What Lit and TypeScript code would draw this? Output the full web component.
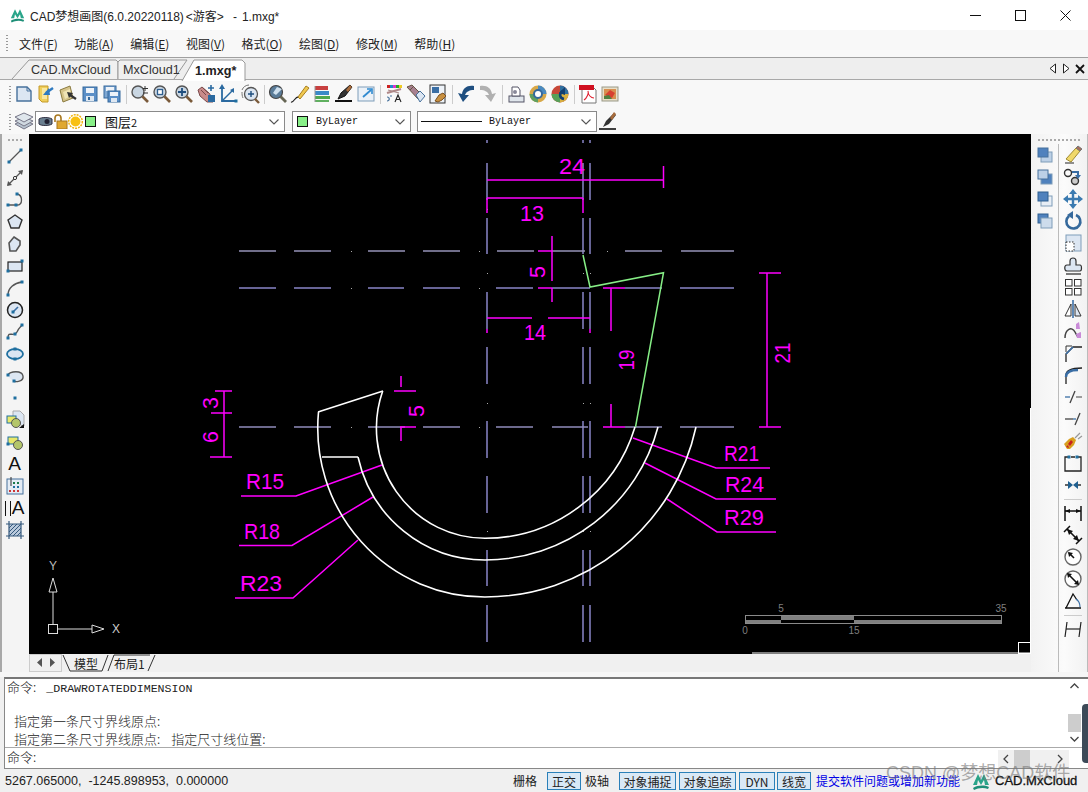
import { LitElement, html, css, svg } from "lit";
import { customElement } from "lit/decorators.js";

const n = (x: number, y: number) => svg`<rect x=${x - 1.5} y=${y - 1.5} width="3" height="3" fill="#1f6f9f"/>`;
const G = "#dce6f2";
const B = "#3a6ea5";
const sq = (a: string, b: string) => svg`<rect x="6" y="7" width="11" height="10" fill=${b} stroke="#7f9db9"/><rect x="3" y="3" width="10" height="9" fill=${a} stroke="#47719c"/>`;
const L = (d: string, c = "#333", w = 1.3) => svg`<path d=${d} fill="none" stroke=${c} stroke-width=${w}/>`;
const F = (d: string, c: string, s = "none") => svg`<path d=${d} fill=${c} stroke=${s}/>`;
const mag = (inner: unknown) => svg`<circle cx="8" cy="8" r="6" fill="#c9d6e2" stroke="#555" stroke-width="1.4"/><path d="M12.5 12.5 18 18" stroke="#7a5a3a" stroke-width="2.6"/>${inner}`;

const leftA = [
  svg`${L("M4 16 16 4", "#555")}${n(4, 16)}${n(16, 4)}`,
  svg`${L("M3 17 17 3", "#555")}<circle cx="10" cy="10" r="1.6" fill="#fff" stroke="#333"/>${F("M2 18 3 13 7 17Z", "#555")}${F("M18 2 13 3 17 7Z", "#555")}`,
  svg`${L("M3 15H12C18 15 18 5 12 4", "#555")}${n(3, 15)}${n(11, 15)}${n(12, 4)}`,
  svg`<path d="M10 3 17 8 14 16 6 16 3 8Z" fill=${G} stroke="#333" stroke-width="1.4"/>`,
  svg`<path d="M9 3 15 7 15 11 11 17 5 17 4 9Z" fill=${G} stroke="#555" stroke-width="1.6"/>`,
  svg`<rect x="3" y="6" width="14" height="9" fill=${G} stroke="#222" stroke-width="1.2"/>${n(3, 15)}${n(17, 5)}`,
  svg`${L("M3 17C3 10 9 5 17 4", "#555", 1.5)}${n(3, 17)}${n(17, 4)}`,
  svg`<circle cx="10" cy="10" r="7.5" fill=${G} stroke="#222" stroke-width="1.5"/>${L("M8 12 13 7", B, 1.6)}${n(8, 12)}`,
  svg`${L("M3 16C3 8 9 16 12 10S15 6 17 3", "#555", 1.4)}${n(3, 16)}${n(10, 12)}${n(17, 3)}`,
  svg`<ellipse cx="10" cy="10" rx="8" ry="5" fill=${G} stroke="#1f6f9f" stroke-width="1.8"/>${n(10, 5)}${n(10, 15)}`,
  svg`<ellipse cx="11" cy="10" rx="7" ry="5" fill=${G} stroke="none"/>${L("M3 9C5 5 17 4 18 10S10 16 9 15", "#555", 1.4)}${n(3, 9)}${n(9, 15)}`,
  svg`${n(10, 10)}`,
  svg`${F("M8 1H15L19 5V16H17L8 8Z", "#dce6f2", "#aaa")}<rect x="2" y="6" width="9" height="7" fill="#e8e86a" stroke="#1f6f9f"/><circle cx="11" cy="13" r="4.5" fill="#b4c66a" stroke="#555"/>${F("M14 18H19V14Z", "#111")}`,
  svg`<rect x="3" y="5" width="10" height="7" fill="#e8e86a" stroke="#1f6f9f"/><circle cx="13" cy="13" r="4.5" fill="#b4c66a" stroke="#555"/>${n(3, 12)}`,
];
const tableIc = svg`<rect x="2" y="3" width="16" height="15" fill="#e4ecf5" stroke="#47719c"/>${L("M6 1V10", "#333", 1)}<rect x="8" y="6" width="2" height="2" fill="#1a7a4a"/><rect x="12" y="6" width="2" height="2" fill="#1a7a4a"/><rect x="8" y="10" width="2" height="2" fill="#1f6f9f"/><rect x="12" y="10" width="2" height="2" fill="#1f6f9f"/><rect x="4" y="14" width="2" height="2" fill="#c33"/><rect x="8" y="14" width="2" height="2" fill="#c33"/><rect x="12" y="14" width="2" height="2" fill="#c33"/>`;
const hatchIc = svg`<rect x="4" y="4" width="12" height="12" fill="#b9c9dc"/>${L("M4 8 8 4M4 12 12 4M4 16 16 4M8 16 16 8M12 16 16 12", "#35597c", 1)}${L("M1 4H19M1 16H19M4 1V19M16 1V19", "#35597c", 1.2)}`;

const col1 = [
  sq("#4f81bd", "#bcd0e6"),
  sq("#bcd0e6", "#4f81bd"),
  svg`<rect x="6" y="7" width="11" height="10" fill="#e8eef5" stroke="#7f9db9"/><rect x="3" y="3" width="10" height="9" fill="#4f81bd" stroke="#2f5f8f"/>`,
  svg`<rect x="3" y="3" width="10" height="9" fill="#4f81bd" stroke="#2f5f8f"/><rect x="6" y="7" width="11" height="10" fill="#cddcec" stroke="#7f9db9"/>`,
];

const col2Top = [
  svg`${L("M2 18H11", "#555")}${F("M3 14 13 3 17 6 8 17Z", "#f0d86a", "#a08a30")}${F("M13 3 15 1 19 4 17 6Z", "#a86c5c", "#777")}`,
  svg`<circle cx="5" cy="6" r="3.5" fill="none" stroke="#333" stroke-width="1.4"/><circle cx="12" cy="14" r="3.5" fill="#ccc" stroke="#333" stroke-width="1.4"/>${L("M9 5H15V9", B, 2)}${F("M12 8H18L15 12Z", B)}`,
  svg`${L("M10 3V17M3 10H17", "#3a7ab0", 2.4)}${F("M10 0 14 5H6Z M10 20 14 15H6Z M0 10 5 6V14Z M20 10 15 6V14Z", "#3a7ab0")}`,
  svg`<path d="M6 5A7 7 0 1 0 13 4" fill="none" stroke="#35699c" stroke-width="2.6"/>${F("M10 0V8L4 4Z", "#35699c")}`,
  svg`<rect x="3" y="2" width="15" height="16" fill=${G} stroke="#7f9db9"/><rect x="3" y="9" width="8" height="9" fill="#fff" stroke="#333" stroke-dasharray="1.5 1.5"/>`,
  svg`<path d="M7 10V6C7 2 13 2 13 6V10H17C19 10 19 16 17 16H4C1 16 1 10 4 10Z" fill=${G} stroke="#333" stroke-width="1.2"/>${L("M3 19H18", "#333")}`,
  svg`<rect x="2.5" y="2.5" width="6.5" height="6.5" fill="#fff" stroke="#333"/><rect x="11.5" y="2.5" width="6.5" height="6.5" fill="#fff" stroke="#333"/><rect x="2.5" y="11.5" width="6.5" height="6.5" fill="#fff" stroke="#333"/><rect x="11.5" y="11.5" width="6.5" height="6.5" fill="#fff" stroke="#333"/>`,
  svg`${L("M10 1V19", B, 1.6)}<path d="M8 5V17H2Z" fill="#fff" stroke="#333"/><path d="M12 5V17H18Z" fill=${G} stroke="#333"/>`,
  svg`${L("M2 17C2 8 9 5 12 11S15 17 17 12", "#444", 1.5)}${F("M13 3 16 1 17 8 13 8Z", "#c98bd8")}${F("M13 13 18 11 18 17 14 17Z", "#c98bd8")}`,
  svg`${L("M3 19V11L10 4H19", "#222", 1.3)}${L("M3 9V3H9", "#333", 1)}${L("M3 11 10 4", B, 1.6)}`,
  svg`${L("M3 19V10C3 6 7 3 19 3", "#222", 1.3)}${L("M3 12C3 7 8 5 15 5", B, 2.4)}`,
  svg`${L("M2 10H7", B)}${L("M13 10H19", "#444", 1)}${L("M7 16 12 4", "#444", 1.3)}`,
  svg`${L("M2 10H10", "#444")}${L("M10 10H13", B)}${L("M12 16 17 4", "#444", 1.3)}`,
  svg`${F("M4 18 1 13 6 8 10 6 13 9 11 14 7 18Z", "#d8a020")}${F("M5 13 8 9 10 11 7 15Z", "#c82020")}${F("M3 16 5 14 6 17Z", "#c82020")}${L("M12 7 17 2M15 8 19 5", "#999", 1.2)}`,
  svg`${L("M5 4H2V18H18V4H15M8 4H12", "#222", 1.3)}${n(6, 4)}${n(14, 4)}`,
  svg`${L("M2 10H8M12 10H18", "#333", 1.5)}${F("M10 10 5 6V14Z M10 10 15 6V14Z", "#1f5f8f")}`,
];
const col2Bot = [
  svg`${L("M2 3V18M18 3V18", "#111", 1.5)}${L("M2 8H18", "#111", 1.5)}${F("M2 8 7 6V10Z M18 8 13 6V10Z", "#111")}`,
  svg`${L("M1 7 7 1M13 19 19 13", "#111", 1.5)}${L("M4 4 16 16", "#111", 1.6)}${F("M4 4 10 6 6 10Z M16 16 10 14 14 10Z", "#111")}`,
  svg`<circle cx="10" cy="10" r="8" fill="#fff" stroke="#666" stroke-width="1.4"/>${L("M6 6 11 11", "#111", 1.6)}${F("M5 5 10 6 6 10Z", "#111")}`,
  svg`<circle cx="10" cy="10" r="8" fill="#fff" stroke="#666" stroke-width="1.4"/>${L("M5 5 15 15", "#111", 1.6)}${F("M4 4 9 5 5 9Z M16 16 11 15 15 11Z", "#111")}`,
  svg`${L("M2 17H18", "#111", 1.5)}${L("M3 17 10 3 14 9", "#111", 1.3)}${L("M13 8C16 10 17 13 17 16", B, 1.2)}`,
  svg`${L("M4 3 2 18M18 3 16 18", "#222", 1.2)}${L("M3 10H17", "#222", 1.2)}`,
];

const top1 = [
  svg`<path d="M3 3H13L17 7V17H3Z" fill=${G} stroke="#47719c" stroke-width="1.4"/>${L("M13 3V7H17", "#47719c", 1)}`,
  svg`${F("M3 2H12V18H6L3 15Z", "#f0cf5a", "#c49a2a")}${F("M6 4H11V15H6Z", "#f8e7a0")}${L("M17 4 10 9", "#2f7ac0", 2.4)}${F("M7 11 13 4 14 11Z", "#2f7ac0")}`,
  svg`${F("M2 6 12 2 15 14 5 18Z", "#d6c48a", "#8a7a40")}${F("M5 8 12 5 13 12 7 15Z", "#efe3b4")}${L("M18 15 12 11", "#333", 2.2)}${F("M9 8 15 9 11 14Z", "#333")}`,
  svg`<rect x="3" y="3" width="14" height="14" fill="#5b8fc7" stroke="#35699c"/><rect x="6" y="4" width="8" height="5" fill="#eef3f9"/><rect x="6" y="12" width="8" height="5" fill="#dfe8f2"/><rect x="8" y="13" width="2" height="3" fill="#35699c"/>`,
  svg`<rect x="2" y="2" width="12" height="12" fill="#7ea7d2" stroke="#35699c"/><rect x="4" y="3" width="8" height="4" fill="#eef3f9"/><rect x="6" y="7" width="12" height="11" fill="#5b8fc7" stroke="#35699c"/><rect x="8" y="8" width="8" height="4" fill="#eef3f9"/><rect x="9" y="14" width="6" height="4" fill="#dfe8f2"/>`,
  0,
  svg`${mag(svg``)}<path d="M15 2V7M13 4.5H18M13 9H18" stroke="#333"/>`,
  mag(svg`<rect x="5.5" y="5.5" width="5" height="5" fill="#fff" stroke="#2f5f8f" stroke-width="1.3"/>`),
  mag(L("M8 4V12M4 8H12", "#1f4f7f", 1.8)),
  svg`${F("M2 6 6 3 13 9 15 12 17 18 11 18 4 12Z", "#c98a8a", "#7a4a4a")}${L("M5 6 10 11M7 4 12 9", "#7a4a4a", 1)}${F("M12 11H19V18H12Z", "#2b6aa0")}${L("M15 1V7M12 4H18", "#2b6aa0", 1.6)}`,
  svg`${L("M4 2V17H19", "#2b6aa0", 1.8)}${L("M4 17 15 6", "#2b6aa0", 1.4)}${F("M4 0 7 5H1Z M16 4 16 9 12 6Z", "#2b6aa0")}${n(18, 17)}`,
  svg`<circle cx="11" cy="10" r="6.5" fill="#dce6f2" stroke="#555" stroke-width="1.3"/>${L("M15 15 19 19", "#7a5a3a", 2.4)}${L("M11 7V13M8 10H14", "#1f4f7f", 1.4)}${L("M2 6C3 3 6 1 9 1M3 14C2 12 2 10 2 8", "#777", 1)}`,
  0,
  svg`<circle cx="8" cy="8" r="6.5" fill="#5a7c99" stroke="#444" stroke-width="1.2"/>${F("M5 9 9 3 14 5 8 11Z", "#cfe0ee")}${L("M12.5 12.5 18 18", "#665", 2.8)}`,
  svg`${L("M1 18C4 19 5 12 9 13", "#222", 1.2)}${F("M8 13 16 2 19 4 10 15Z", "#f0c850", "#a88020")}`,
  svg`<rect x="3" y="2" width="13" height="4" fill="#c84040"/><rect x="3" y="7" width="14" height="4" fill="#3a8ac8"/><rect x="3" y="12" width="15" height="3" fill="#50a850"/><rect x="3" y="16" width="14" height="2" fill="#60b060"/>${L("M3 2V18", "#999", 1)}`,
  svg`${L("M1 17H18", "#111", 2)}${F("M4 15 7 9 16 1 18 3 11 12Z", "#333", "#111")}${F("M12 6 16 1 18 3 14 8Z", "#a86c3c")}`,
  svg`<rect x="2" y="3" width="16" height="14" fill="#eaf1f8" stroke="#7f9db9"/>${L("M7 13 15 6", "#2f8ad0", 1.8)}${L("M11 5H16V10", "#2f8ad0", 1.6)}`,
  0,
  svg`<rect x="3" y="1" width="3" height="3" fill="#c22"/><rect x="6" y="1" width="3" height="3" fill="#28c"/><rect x="9" y="1" width="3" height="3" fill="#d3c"/><rect x="12" y="1" width="3" height="3" fill="#2a2"/><rect x="15" y="1" width="3" height="3" fill="#ec2"/>${L("M3 9 17 5", "#b08888", 2.2)}${L("M4 6 15 9", "#a88", 1.2)}${L("M3 17C6 17 6 13 3 13M6 12H8", "#47719c", 1.2)}${L("M11 18 14 11 17 18M12.500 15.500H16", "#222", 1.1)}`,
  svg`${F("M1 3 6 1 16 11 12 15Z", "#a88090", "#654")}${F("M10 11 14 7 19 12 14 18Z", "#dce6f2", "#47719c")}${L("M4 6 7 3", "#654", 1)}`,
  svg`<rect x="2" y="1" width="15" height="18" fill="#eef3f9" stroke="#333"/><rect x="4" y="3" width="7" height="6" fill="#3a6ea5"/>${F("M7 17 11 11 15 9 18 12 14 16 10 18Z", "#c89040", "#7a5020")}`,
  0,
  svg`${F("M18 2C11 1 7 4 6 10L2 9 7 18 13 11 9 11C10 8 13 6 18 6Z", "#1f4f80")}`,
  svg`${F("M2 2C9 1 13 4 14 10L18 9 13 18 7 11 11 11C10 8 7 6 2 6Z", "#b0b0b0")}`,
  0,
  svg`<rect x="3" y="12" width="15" height="6" fill="#e0e6ec" stroke="#556"/><path d="M6 12V3H12L14 6V12Z" fill="#fff" stroke="#556"/><circle cx="9" cy="8" r="2" fill="#889"/>`,
  svg`<circle cx="10" cy="10" r="8.5" fill="#d8a848"/><path d="M10 1.5A8.5 8.5 0 0 1 18.5 10H10Z" fill="#4a8ac0"/><path d="M10 10H1.5A8.5 8.5 0 0 0 10 18.5Z" fill="#60a060"/><circle cx="10" cy="10" r="4" fill="#fff" stroke="#35699c" stroke-width="2"/>`,
  svg`<circle cx="10" cy="10" r="8.5" fill="#c84838"/><path d="M10 1.5A8.5 8.5 0 0 1 18.5 10H10Z" fill="#2f6f9f"/><path d="M10 10H1.5A8.5 8.5 0 0 0 10 18.5Z" fill="#58a058"/><path d="M10 10 18.5 10A8.5 8.5 0 0 1 10 18.5Z" fill="#d8b040"/>${L("M14 15C9 14 9 9 13 7", "#123f70", 2.6)}${F("M9 9 15 3V11Z", "#123f70")}`,
  0,
  svg`<path d="M4 2H14L18 6V19H4Z" fill="#fff" stroke="#777"/><rect x="1" y="1" width="15" height="5" fill="#d01020"/>${L("M6 16C9 14 11 9 10 7C10 11 13 14 16 14", "#e02030", 1.1)}`,
  svg`<rect x="2" y="3" width="16" height="14" fill="#e8dfc8" stroke="#998"/><rect x="4" y="5" width="12" height="10" fill="#d89050"/>${F("M5 11 10 6 15 9 12 14Z", "#d84030")}${F("M4 12 9 11 12 15H4Z", "#508040")}`,
];

const vDash = [[140, 143], [163, 200], [218, 254], [292, 329], [347, 384], [421, 458], [476, 513], [550, 586], [605, 642]];
const h251 = [[239, 276], [294, 331], [368, 405], [423, 460], [497, 534], [552, 585], [625, 662], [681, 734]];
const h288 = [[239, 276], [294, 331], [368, 404], [423, 460], [496, 533], [552, 590], [625, 662], [680, 734]];
const h427 = [[239, 276], [294, 331], [368, 405], [423, 460], [496, 533], [552, 588], [625, 662], [680, 734]];
const dots = [[351, 251], [479, 251], [607, 251], [351, 288], [479, 288], [351, 427], [479, 427], [487, 273], [583, 273], [590, 273], [487, 403], [583, 403], [590, 403], [487, 531], [583, 531], [590, 531], [487, 209]];

const magenta = [
  "M487 180H663", "M663.5 166V188",
  "M487 198H583", "M487 198V213", "M583 198V213",
  "M552 236V281M552 288V302", "M538 251H552", "M538 288H552",
  "M487 318H532M548 318H590", "M487 329V333", "M590 329V333",
  "M611 288V331M611 404V427", "M603 288H625", "M603 427H625",
  "M767 273V427", "M759 273H781", "M759 427H781",
  "M224 391V457", "M215 391H232", "M211 413H232", "M210 457H232",
  "M401 376V387M401 427V441", "M394 391H416", "M400 427H416",
  "M382 465 296 496H241", "M373 497 292 545.5H239", "M358 540 293 598H235",
  "M633 438 716 468H770", "M645 463 716 499H776", "M667 499 717 532H776",
];

const cadText = (x: number, y: number, w: number, s: string) => svg`<text class="dim" x=${x} y=${y} textLength=${w} lengthAdjust="spacingAndGlyphs">${s}</text>`;
const cadRot = (cx: number, cy: number, w: number, s: string) => svg`<text class="dim" transform="translate(${cx} ${cy}) rotate(-90)" x=${-w / 2} y="8" textLength=${w} lengthAdjust="spacingAndGlyphs">${s}</text>`;

const statusItems = [
  { t: "栅格", l: 0, w: 24, on: false },
  { t: "正交", l: 10, w: 34, on: true },
  { t: "极轴", l: 4, w: 24, on: false },
  { t: "对象捕捉", l: 10, w: 57, on: true },
  { t: "对象追踪", l: 3, w: 57, on: true },
  { t: "DYN", l: 3, w: 36, on: true },
  { t: "线宽", l: 2, w: 34, on: true },
];

const logo = svg`<path d="M1 13 6 2 9 8 12 2 17 13 13 13 12 8 9 13 6 8 5 13Z" fill="#2aa58a"/><path d="M1 16C6 13 12 13 17 15L16 17C11 15 6 16 2 18Z" fill="#1e8f78"/>`;

@customElement("app-root")
export class AppRoot extends LitElement {
  static styles = css`
    :host { display: block; width: 1088px; height: 792px; position: relative; overflow: hidden; font-family: "Liberation Sans", "Noto Sans CJK SC", sans-serif; font-size: 12px; color: #111; background: #f0f0f0; }
    .app { display: flex; flex-direction: column; height: 792px; }
    .title { height: 30px; background: #fff; display: flex; align-items: center; padding-left: 10px; box-sizing: border-box; flex: none; }
    .tlogo { width: 15px; height: 16px; margin-right: 5px; flex: none; }
    .title .tx { flex: 1; white-space: pre; color: #222; font-size: 12px; }
    .tx .g { margin-left: 2px; margin-right: 9px; }
    .tx .h { margin-right: 5px; }
    .wc { display: flex; align-items: center; padding-right: 17px; gap: 34px; }
    .wc svg { display: block; }
    .menu { height: 27px; background: #f8f8f8; display: flex; align-items: center; flex: none; padding-left: 6px; box-sizing: border-box; }
    .vgrip { width: 2px; height: 17px; background-image: linear-gradient(#999 50%, transparent 50%); background-size: 2px 3px; margin-right: 11px; }
    .menu .items { display: flex; gap: 16.5px; }
    .menu .it { font-size: 12px; font-family: "Noto Sans CJK SC", sans-serif; color: #222; }
    .strip { height: 23px; flex: none; box-sizing: border-box; border-top: 1.5px solid #a0a0a0; border-bottom: 1.5px solid #a8a8a8; background: #eeeeee; display: flex; align-items: flex-end; padding-left: 12px; position: relative; }
    .tab { position: relative; height: 19px; flex: none; display: flex; align-items: center; font-size: 12.6px; color: #333; }
    .tab svg { position: absolute; left: 0; top: 0; width: 100%; height: 100%; overflow: visible; }
    .tab span { position: relative; }
    .t1 { width: 106px; padding-left: 19px; box-sizing: border-box; }
    .t2 { width: 72px; padding-left: 5px; box-sizing: border-box; }
    .t3 { width: 63px; margin-left: -8px; padding-left: 13px; box-sizing: border-box; font-weight: 700; color: #222; margin-bottom: -2px; height: 21px; }
    .nav { margin-left: auto; display: flex; align-items: center; gap: 5px; padding-right: 3px; align-self: center; }
    .tools { height: 54px; flex: none; background: #f8f8f8; }
    .row1 { height: 28px; display: flex; align-items: center; padding-left: 13px; position: relative; }
    .row1 .vgrip, .row2 .vgrip { position: absolute; left: 9px; top: 6px; margin: 0; }
    .ic { width: 22px; height: 22px; flex: none; display: flex; align-items: center; justify-content: center; }
    .ic svg { width: 20px; height: 20px; display: block; }
    .sep { width: 1px; height: 19px; background: #ccc; margin: 0 2px 0 3px; flex: none; }
    .row2 { height: 26px; display: flex; align-items: flex-start; padding-left: 13px; position: relative; }
    .row2 > .ic { margin-top: 2px; width: 22px; }
    .combo { height: 21px; margin-top: 3px; box-sizing: border-box; border: 1px solid #8a8a8a; background: #fff; display: flex; align-items: center; position: relative; flex: none; }
    .chev { position: absolute; right: 4px; top: 6px; }
    .c1 { width: 250px; padding-left: 2px; }
    .c1 .layer { font-family: "Noto Sans CJK SC", sans-serif; font-size: 13px; margin-left: 7px; }
    .c1 .layer small { font-size: 11px; }
    .c2 { width: 119px; margin-left: 7px; padding-left: 4px; }
    .c3 { width: 180px; margin-left: 6px; padding-left: 3px; }
    .bl { font-family: "Liberation Mono", monospace; font-size: 10px; color: #111; }
    .c2 .bl { margin-left: 8px; }
    .c3 .bl { margin-left: 7px; }
    .swatch { width: 11px; height: 11px; background: #88f088; border: 1px solid #111; box-sizing: border-box; flex: none; }
    .ln { width: 61px; height: 1px; background: #111; flex: none; }
    .mini { width: 15px; height: 15px; flex: none; display: block; }
    .main { height: 538px; flex: none; display: flex; }
    .left { width: 27px; flex: none; border-left: 2px solid #a8a8a8; background: #f4f4f4; padding-top: 3px; box-sizing: content-box; display: flex; flex-direction: column; align-items: center; }
    .hgrip { height: 2px; width: 16px; background-image: linear-gradient(90deg, #aaa 50%, transparent 50%); background-size: 4px 2px; margin: 2px 0 4px; flex: none; }
    .left .ic { margin-left: -2px; }
    .txA { font-size: 19px; line-height: 22px; color: #111; font-family: "Liberation Sans", sans-serif; }
    .bars { width: 4px; height: 15px; border-left: 1px solid #111; border-right: 1px solid #111; margin-right: 1px; flex: none; }
    .center { width: 1002px; flex: none; display: flex; flex-direction: column; }
    .cv { display: block; width: 1002px; height: 520px; background: #000; }
    .dim { font-family: "Liberation Sans", sans-serif; font-size: 22px; fill: #f0f; }
    .sheets { height: 18px; background: #f0f0f0; display: flex; align-items: center; position: relative; font-family: "Noto Sans CJK SC", sans-serif; color: #222; }
    .sheets svg { position: absolute; left: 0; top: 0; }
    .sheets .a { position: relative; margin-left: 45px; }
    .sheets .b { position: relative; margin-left: 16px; }
    .right { width: 57px; flex: none; background: linear-gradient(90deg, #f2f2f2, #fbfbfb 60%, #f2f2f2); box-sizing: border-box; border-right: 1px solid #bbb; position: relative; padding: 5px 0 0 3px; display: flex; flex-direction: column; }
    .right .hgrip { width: 42px; margin: 0 0 3px 4px; }
    .cols { display: flex; }
    .cols .cl { width: 22px; }
    .cols .cr { width: 22px; margin-left: 6px; }
    .divider { width: 1px; background: #bbb; margin-left: 2px; margin-right: -3px; height: 528px; }
    .hs { height: 1px; background: #ccc; margin: 3px 2px 2px; }
    .gap { height: 5px; flex: none; background: #f6f6f6; }
    .cmd { height: 92px; flex: none; margin-left: 4px; box-sizing: border-box; border: 1px solid #888; border-top: 2px solid #777; border-right: 0; background: #fff; display: flex; flex-direction: column; position: relative; font-family: "Noto Sans CJK SC", sans-serif; font-size: 13px; font-weight: 300; }
    .out { height: 69px; box-sizing: border-box; border-bottom: 1px solid #aaa; padding: 0 0 0 2px; }
    .ol { height: 16.8px; line-height: 16px; margin-bottom: .8px; white-space: pre; color: #222; }
    .ol.ind { padding-left: 7px; }
    .ol .m { font-family: "Liberation Mono", monospace; font-size: 11.6px; margin-left: 10px; font-weight: 400; }
    .ol .nx { margin-left: 11px; }
    .ol.sp { height: 16px; }
    .inp { padding: 0 0 0 2px; line-height: 18px; flex: 1; color: #222; }
    .vs { position: absolute; right: 7px; top: 1px; width: 13px; height: 66px; }
    .thumb { position: absolute; right: 0; top: 34px; width: 13px; height: 18px; background: #cdcdcd; }
    .hb { position: absolute; left: 993px; top: 71px; width: 71px; height: 18px; background: #f0f0f0; }
    .hb i { position: absolute; left: 16px; top: 0; width: 16px; height: 18px; background: #cdcdcd; }
    .gad { position: absolute; right: 0; top: 25px; width: 6px; height: 59px; border-radius: 4px 0 0 4px; background: #3c4a58; }
    .status { height: 23px; flex: none; background: #f0f0f0; display: flex; align-items: center; padding-left: 5px; font-family: "Noto Sans CJK SC", sans-serif; color: #222; }
    .coord { width: 508px; flex: none; font-family: "Liberation Sans", sans-serif; font-size: 12.5px; white-space: pre; }
    .st { flex: none; text-align: center; height: 18px; line-height: 17px; box-sizing: border-box; white-space: nowrap; }
    .st.on { background: #d9e9f6; border: 1px solid #2a80b9; }
    .link { color: #0000e6; margin-left: 5px; width: 143px; flex: none; white-space: nowrap; }
    .slogo { width: 18px; height: 18px; margin-left: 13px; flex: none; }
    .brand { margin-left: 5px; font-family: "Liberation Sans", sans-serif; font-size: 13px; color: #111; -webkit-text-stroke: .3px #111; white-space: nowrap; }
    .wm { position: absolute; left: 886px; top: 761px; font-size: 18px; line-height: 24px; color: rgba(120,120,120,.62); font-family: "Liberation Sans", "Noto Sans CJK SC", sans-serif; white-space: nowrap; }
  `;

  private canvas() {
    const cl = "#8a86c8";
    const vlines = [487, 583, 590].flatMap((x) => vDash.map(([a, b]) => svg`<path d="M${x} ${a}V${b}" stroke=${cl} stroke-width="1.5"/>`));
    const hl = (y: number, arr: number[][], c: string) => arr.map(([a, b]) => svg`<path d="M${a} ${y}H${b}" stroke=${c} stroke-width="1.5"/>`);
    return svg`
      ${vlines}
      ${hl(251, h251, "#9693b8")}
      ${hl(288, h288, cl)}
      ${hl(427, h427, "#908dbb")}
      ${dots.map(([x, y]) => svg`<rect x=${x} y=${y} width="1" height="1" fill="#aaa"/>`)}
      ${magenta.map((d) => svg`<path d=${d} fill="none" stroke="#f0f" stroke-width="1.5"/>`)}
      <g fill="none" stroke="#fff" stroke-width="1.6">
        <path d="M382.7 391A108.5 110.3 0 0 0 485 538.3A156.7 156.7 0 0 0 635 427"/>
        <path d="M358 457A130 132 0 0 0 485 560A179 179 0 0 0 658 427"/>
        <path d="M318.500 412A167 169 0 0 0 485 597A216 216 0 0 0 696 427"/>
        <path d="M318 412 383 391M322 457H358"/>
      </g>
      <path d="M583 255 590 287 663.5 272.7 635.5 427" fill="none" stroke="#86ee86" stroke-width="1.5"/>
      ${cadText(559, 174, 26, "24")}
      ${cadText(520, 221, 24, "13")}
      ${cadText(524, 340, 22, "14")}
      ${cadText(246, 489, 38, "R15")}
      ${cadText(244, 539, 36, "R18")}
      ${cadText(240, 591, 42, "R23")}
      ${cadText(724, 461, 35, "R21")}
      ${cadText(725, 492, 39, "R24")}
      ${cadText(724, 525, 40, "R29")}
      ${cadRot(537, 272, 12, "5")}
      ${cadRot(626, 360, 21, "19")}
      ${cadRot(782, 353, 21, "21")}
      ${cadRot(210, 403, 12, "3")}
      ${cadRot(210, 437, 12, "6")}
      ${cadRot(416, 411, 12, "5")}
      <g fill="none" stroke="#ddd" stroke-width="1">
        <rect x="48.5" y="624.5" width="9" height="9"/>
        <path d="M53 624V592M49 592H57L53 578ZM58 629H92M92 625V633L104 629Z"/>
      </g>
      <text x="53" y="570" text-anchor="middle" font-size="12" fill="#bbb" font-family="Liberation Sans">Y</text>
      <text x="116" y="633" text-anchor="middle" font-size="12" fill="#ccc" font-family="Liberation Sans">X</text>
      <g fill="#808080">
        <rect x="745" y="620" width="36" height="4"/><rect x="781" y="616" width="73" height="4"/><rect x="854" y="620" width="148" height="4"/>
      </g>
      <rect x="745.5" y="615.5" width="256" height="8" fill="none" stroke="#8a8a8a"/>
      <g fill="#7f7f7f" font-size="10" font-family="Liberation Sans" text-anchor="middle">
        <text x="781" y="612">5</text><text x="1001" y="612">35</text><text x="745" y="634">0</text><text x="854" y="634">15</text>
      </g>
      <path d="M752 653H1030.5V408" fill="none" stroke="#fff" stroke-width="1"/>
      <rect x="1018.5" y="642.5" width="12" height="11" fill="none" stroke="#fff"/>
    `;
  }

  render() {
    const ic = (f: unknown) => html`<div class="ic"><svg viewBox="0 0 20 20">${f}</svg></div>`;
    const chev = html`<svg class="chev" width="12" height="8" viewBox="0 0 12 8"><path d="M1.5 1.5 6 6 10.5 1.5" fill="none" stroke="#555" stroke-width="1.1"/></svg>`;
    const menu: [string, string][] = [["文件", "F"], ["功能", "A"], ["编辑", "E"], ["视图", "V"], ["格式", "O"], ["绘图", "D"], ["修改", "M"], ["帮助", "H"]];
    return html`
      <div class="app">
        <div class="title">
          <svg class="tlogo" viewBox="0 0 18 18">${logo}</svg>
          <div class="tx">CAD梦想画图(6.0.20220118)<span class="g">&lt;游客&gt;</span><span class="h">-</span>1.mxg*</div>
          <div class="wc">
            <svg width="11" height="11" viewBox="0 0 11 11"><path d="M0 5.500H11" stroke="#111"/></svg>
            <svg width="11" height="11" viewBox="0 0 11 11"><rect x=".5" y=".5" width="10" height="10" fill="none" stroke="#111"/></svg>
            <svg width="11" height="11" viewBox="0 0 11 11"><path d="M.5 .5 10.5 10.5M10.5 .5 .5 10.5" stroke="#111"/></svg>
          </div>
        </div>
        <div class="menu">
          <div class="vgrip"></div>
          <div class="items">${menu.map(([a, b]) => html`<span class="it">${a}(<u>${b}</u>)</span>`)}</div>
        </div>
        <div class="strip">
          <div class="tab t1"><svg viewBox="0 0 106 19" preserveAspectRatio="none"><path d="M0 19 17 0H104L106 2V19" fill="#f0f0f0" stroke="#999"/></svg><span>CAD.MxCloud</span></div>
          <div class="tab t2"><svg viewBox="0 0 72 19" preserveAspectRatio="none"><path d="M0 19V2L2 0H69L56 19" fill="#f0f0f0" stroke="#999"/></svg><span>MxCloud1</span></div>
          <div class="tab t3"><svg viewBox="0 0 63 21" preserveAspectRatio="none"><path d="M0 21 12 0H60L63 3V21" fill="#fff" stroke="#999"/></svg><span>1.mxg*</span></div>
          <div class="nav">
            <svg width="8" height="11" viewBox="0 0 8 11"><path d="M6.5 1V10L1 5.500Z" fill="#fff" stroke="#222"/></svg>
            <svg width="8" height="11" viewBox="0 0 8 11"><path d="M1.500 1V10L7 5.500Z" fill="#fff" stroke="#222"/></svg>
            <svg width="10" height="10" viewBox="0 0 10 10"><path d="M1 1 9 9M9 1 1 9" stroke="#111" stroke-width="1.8"/></svg>
          </div>
        </div>
        <div class="tools">
          <div class="row1">
            <div class="vgrip"></div>
            ${top1.map((f) => (f === 0 ? html`<div class="sep"></div>` : ic(f)))}
          </div>
          <div class="row2">
            <div class="vgrip"></div>
            ${ic(svg`${F("M10 9 19 13 10 18 1 13Z", "#b7c3cf", "#778")}${F("M10 6 19 10 10 15 1 10Z", "#cfd8e0", "#778")}${F("M10 2 19 6 10 11 1 6Z", "#dfe6ec", "#778")}`)}
            <div class="combo c1">
              <svg class="mini" viewBox="0 0 15 15"><path d="M1 5C3 3 11 3 14 5V10C11 12 3 12 1 10Z" fill="#6a7f90" stroke="#334"/><circle cx="9" cy="7.500" r="2.500" fill="#223"/></svg>
              <svg class="mini" viewBox="0 0 15 15"><path d="M2 8V4C2 0 8 0 8 4V7" fill="none" stroke="#a87820" stroke-width="1.600"/><rect x="4" y="7" width="10" height="8" fill="#e0a830" stroke="#a87820"/></svg>
              <svg class="mini" viewBox="0 0 15 15"><circle cx="7.500" cy="7.500" r="5" fill="#f8c010"/><circle cx="7.500" cy="7.500" r="6.800" fill="none" stroke="#f0b000" stroke-width="1.400" stroke-dasharray="2 1"/></svg>
              <svg class="mini" viewBox="0 0 15 15"><rect x="2.500" y="2.500" width="10" height="10" fill="#88f088" stroke="#111"/></svg>
              <span class="layer">图层<small>2</small></span>
              ${chev}
            </div>
            <div class="combo c2"><span class="swatch"></span><span class="bl">ByLayer</span>${chev}</div>
            <div class="combo c3"><span class="ln"></span><span class="bl">ByLayer</span>${chev}</div>
            <div class="ic">
              <svg viewBox="0 0 20 20">${L("M1 18H18", "#111", 1.6)}${F("M5 16 8 10 16 2 18 4 11 13Z", "#333")}${F("M12 7 16 1 18 3 14 9Z", "#a86c3c")}</svg>
            </div>
          </div>
        </div>
        <div class="main">
          <div class="left">
            <div class="hgrip"></div>
            ${leftA.map(ic)}
            <div class="ic"><span class="txA">A</span></div>
            ${ic(tableIc)}
            <div class="ic"><span class="bars"></span><span class="txA">A</span></div>
            ${ic(hatchIc)}
          </div>
          <div class="center">
            <svg class="cv" viewBox="29 134 1002 520">${this.canvas()}</svg>
            <div class="sheets">
              <svg width="160" height="18" viewBox="0 0 160 18">
                <rect x=".5" y=".5" width="32" height="17" fill="#f0f0f0" stroke="#ccc"/>
                <path d="M13 4V13L8 8.500ZM21 4V13L26 8.500Z" fill="#555"/>
                <path d="M34 1 41 17H73L79 1M79 17 85 1H121M119 17 126 1" fill="none" stroke="#333"/>
              </svg>
              <span class="a">模型</span><span class="b">布局1</span>
            </div>
          </div>
          <div class="right">
            <div class="hgrip"></div>
            <div class="cols">
              <div class="cl">${col1.map(ic)}</div>
              <div class="divider"></div>
              <div class="cr">
                ${col2Top.map(ic)}
                <div class="hs"></div>
                ${col2Bot.slice(0, 5).map(ic)}
                <div class="hs"></div>
                ${ic(col2Bot[5])}
              </div>
            </div>
          </div>
        </div>
        <div class="gap"></div>
        <div class="cmd">
          <div class="out">
            <div class="ol">命令:<span class="m">_DRAWROTATEDDIMENSION</span></div>
            <div class="ol sp"></div>
            <div class="ol ind">指定第一条尺寸界线原点:</div>
            <div class="ol ind">指定第二条尺寸界线原点:<span class="nx">指定尺寸线位置:</span></div>
          </div>
          <div class="inp">命令:</div>
          <div class="vs">
            <svg width="13" height="66" viewBox="0 0 13 66"><path d="M2.500 8 6.500 4 10.500 8M2.500 57 6.500 61 10.500 57" fill="none" stroke="#444" stroke-width="1.300"/></svg>
            <div class="thumb"></div>
          </div>
          <div class="hb">
            <svg width="71" height="18" viewBox="0 0 71 18"><path d="M10 5 6 9 10 13M60 5 64 9 60 13" fill="none" stroke="#444" stroke-width="1.300"/></svg>
            <i></i>
          </div>
          <div class="gad"></div>
        </div>
        <div class="status">
          <span class="coord">5267.065000,  -1245.898953,  0.000000</span>
          ${statusItems.map((s) => html`<span class="st ${s.on ? "on" : ""}" style="width:${s.w}px;margin-left:${s.l}px">${s.t}</span>`)}
          <span class="link">提交软件问题或增加新功能</span>
          <svg class="slogo" viewBox="0 0 18 18">${logo}</svg>
          <span class="brand">CAD.MxCloud</span>
        </div>
      </div>
      <div class="wm">CSDN @梦想CAD软件</div>
    `;
  }
}
